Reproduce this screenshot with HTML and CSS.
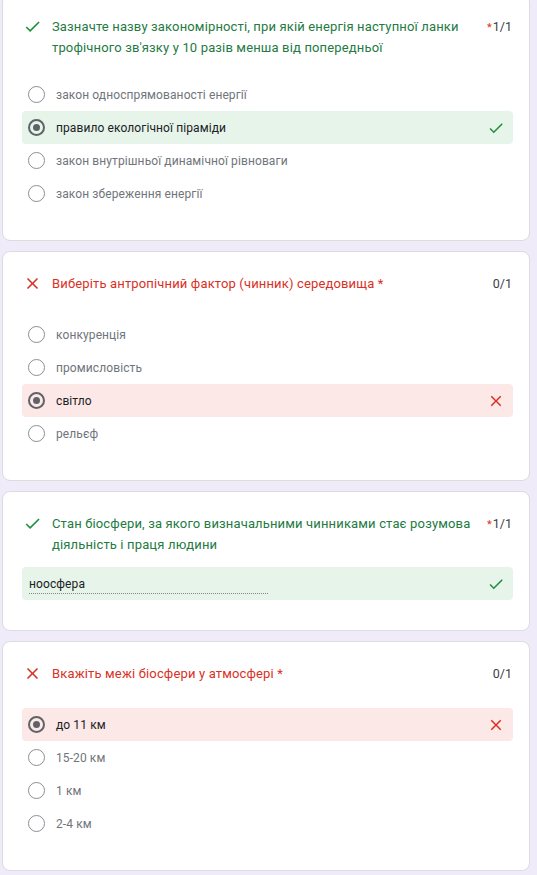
FILE: index.html
```html
<!DOCTYPE html>
<html lang="uk">
<head>
<meta charset="utf-8">
<title>Результати</title>
<link rel="stylesheet" href="styles.css">
</head>
<body>
<main class="page">

  <section class="card card--first">
    <div class="q-head">
      <svg class="mark mark--ok" viewBox="0 0 24 24"><path d="M9 16.17L4.83 12l-1.42 1.41L9 19 21 7l-1.41-1.41z"/></svg>
      <div class="q-title q-title--ok">Зазначте назву закономірності, при якій енергія наступної ланки трофічного зв'язку у 10 разів менша від попередньої</div>
      <div class="score"><span class="req">*</span>1/1</div>
    </div>
    <ul class="options options--tight">
      <li class="opt"><span class="radio"></span><span class="opt-label">закон односпрямованості енергії</span></li>
      <li class="opt opt--right"><span class="radio radio--on"></span><span class="opt-label">правило екологічної піраміди</span><svg class="mark mark--ok" viewBox="0 0 24 24"><path d="M9 16.17L4.83 12l-1.42 1.41L9 19 21 7l-1.41-1.41z"/></svg></li>
      <li class="opt"><span class="radio"></span><span class="opt-label">закон внутрішньої динамічної рівноваги</span></li>
      <li class="opt"><span class="radio"></span><span class="opt-label">закон збереження енергії</span></li>
    </ul>
  </section>

  <section class="card">
    <div class="q-head">
      <svg class="mark mark--bad" viewBox="0 0 24 24"><path d="M19 6.41L17.59 5 12 10.59 6.41 5 5 6.41 10.59 12 5 17.59 6.41 19 12 13.41 17.59 19 19 17.59 13.41 12z"/></svg>
      <div class="q-title q-title--bad">Виберіть антропічний фактор (чинник) середовища *</div>
      <div class="score">0/1</div>
    </div>
    <ul class="options">
      <li class="opt"><span class="radio"></span><span class="opt-label">конкуренція</span></li>
      <li class="opt"><span class="radio"></span><span class="opt-label">промисловість</span></li>
      <li class="opt opt--wrong"><span class="radio radio--on"></span><span class="opt-label">світло</span><svg class="mark mark--bad" viewBox="0 0 24 24"><path d="M19 6.41L17.59 5 12 10.59 6.41 5 5 6.41 10.59 12 5 17.59 6.41 19 12 13.41 17.59 19 19 17.59 13.41 12z"/></svg></li>
      <li class="opt"><span class="radio"></span><span class="opt-label">рельєф</span></li>
    </ul>
  </section>

  <section class="card">
    <div class="q-head">
      <svg class="mark mark--ok" viewBox="0 0 24 24"><path d="M9 16.17L4.83 12l-1.42 1.41L9 19 21 7l-1.41-1.41z"/></svg>
      <div class="q-title q-title--ok">Стан біосфери, за якого визначальними чинниками стає розумова діяльність і праця людини</div>
      <div class="score"><span class="req">*</span>1/1</div>
    </div>
    <div class="answer answer--right">
      <span class="answer-text">ноосфера</span>
      <svg class="mark mark--ok" viewBox="0 0 24 24"><path d="M9 16.17L4.83 12l-1.42 1.41L9 19 21 7l-1.41-1.41z"/></svg>
    </div>
  </section>

  <section class="card">
    <div class="q-head">
      <svg class="mark mark--bad" viewBox="0 0 24 24"><path d="M19 6.41L17.59 5 12 10.59 6.41 5 5 6.41 10.59 12 5 17.59 6.41 19 12 13.41 17.59 19 19 17.59 13.41 12z"/></svg>
      <div class="q-title q-title--bad">Вкажіть межі біосфери у атмосфері *</div>
      <div class="score">0/1</div>
    </div>
    <ul class="options">
      <li class="opt opt--wrong"><span class="radio radio--on"></span><span class="opt-label">до 11 км</span><svg class="mark mark--bad" viewBox="0 0 24 24"><path d="M19 6.41L17.59 5 12 10.59 6.41 5 5 6.41 10.59 12 5 17.59 6.41 19 12 13.41 17.59 19 19 17.59 13.41 12z"/></svg></li>
      <li class="opt"><span class="radio"></span><span class="opt-label">15-20 км</span></li>
      <li class="opt"><span class="radio"></span><span class="opt-label">1 км</span></li>
      <li class="opt"><span class="radio"></span><span class="opt-label">2-4 км</span></li>
    </ul>
  </section>

</main>
</body>
</html>
```

FILE: styles.css
```css
* { box-sizing: border-box; }

html, body {
  margin: 0;
  padding: 0;
  background: #f0ebf8;
}

body {
  font-family: Roboto, "Noto Sans", Arial, sans-serif;
  font-size: 12px;
  color: #202124;
  overflow: hidden;
}

.page {
  display: flex;
  flex-direction: column;
  gap: 10px;
  padding: 0 7px 0 2px;
}

.card {
  background: #fff;
  border: 1px solid #dadce0;
  border-radius: 8px;
  padding: 21px 16px 30px 19px;
}

.card--first {
  margin-top: -6px;
}

.q-head {
  display: flex;
  align-items: flex-start;
  padding: 0 1px 0 1px;
}

.mark {
  width: 19px;
  height: 19px;
  flex: none;
}

.mark--ok { fill: #1e8e3e; }
.mark--bad { fill: #d93025; }

.q-head .mark {
  margin-top: 1px;
  margin-right: 10px;
}

.q-title {
  flex: 1;
  font-size: 13px;
  line-height: 21px;
  letter-spacing: 0.15px;
  padding-right: 12px;
}

.q-title--ok { color: #237a42; }
.q-title--bad { color: #d93025; }

.score {
  flex: none;
  line-height: 21px;
  color: #3c4043;
  font-size: 12.5px;
}

.req {
  color: #d93025;
  font-size: 11px;
  margin-right: 1px;
}

.options {
  list-style: none;
  margin: 24px 0 0;
  padding: 0;
}

.options--tight {
  margin-top: 20px;
}

.opt {
  display: flex;
  align-items: center;
  height: 33px;
  padding: 0 8px 0 6px;
  border-radius: 4px;
  color: #70757a;
  font-size: 12px;
  letter-spacing: 0.1px;
}

.opt-label {
  flex: 1;
  margin-left: 11px;
}

.opt--right { background: #e6f4ea; color: #202124; }
.opt--wrong { background: #fce8e6; color: #202124; }

.opt .mark {
  width: 18px;
  height: 18px;
}

.radio {
  width: 17px;
  height: 17px;
  flex: none;
  border: 1.5px solid #8a8f94;
  border-radius: 50%;
  display: flex;
  align-items: center;
  justify-content: center;
}

.radio--on {
  border: 2px solid #5f6368;
}

.radio--on::after {
  content: "";
  width: 7px;
  height: 7px;
  border-radius: 50%;
  background: #5f6368;
}

.answer {
  display: flex;
  align-items: center;
  height: 33px;
  margin-top: 12px;
  padding: 0 8px 0 7px;
  border-radius: 4px;
  font-size: 12px;
  letter-spacing: 0.1px;
}

.answer--right { background: #e6f4ea; }

.answer-text {
  width: 239px;
  margin-right: auto;
  color: #202124;
  line-height: 17px;
  padding-top: 2px;
  border-bottom: 1px dotted #80868b;
}

.answer .mark {
  width: 18px;
  height: 18px;
}
```
